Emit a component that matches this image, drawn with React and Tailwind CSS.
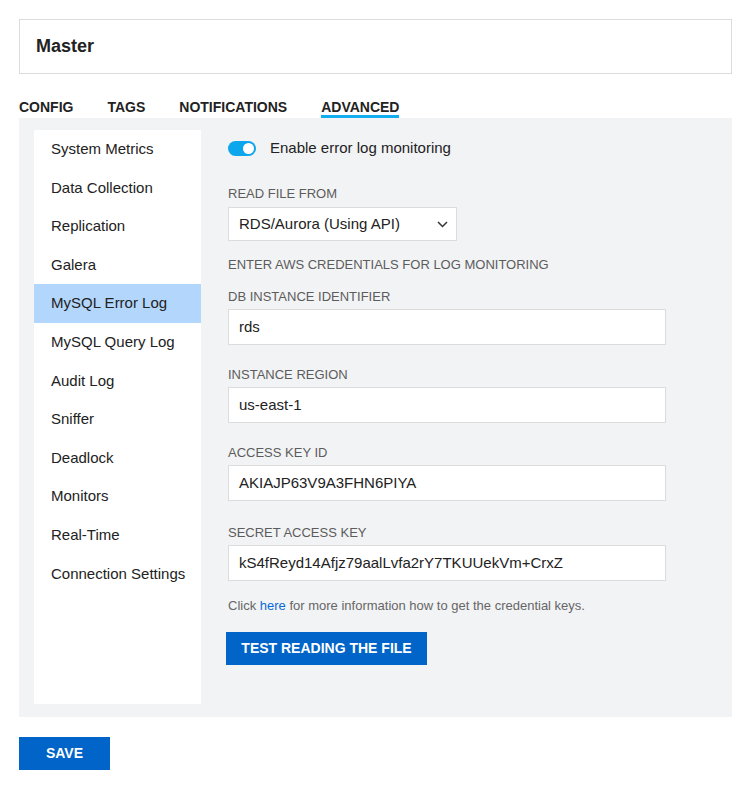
import { useState } from "react";

const menu = [
  "System Metrics",
  "Data Collection",
  "Replication",
  "Galera",
  "MySQL Error Log",
  "MySQL Query Log",
  "Audit Log",
  "Sniffer",
  "Deadlock",
  "Monitors",
  "Real-Time",
  "Connection Settings",
];

const tabs = ["CONFIG", "TAGS", "NOTIFICATIONS", "ADVANCED"];

function Field({ label, value, className }) {
  return (
    <div className={className}>
      <div className="text-[13px] leading-[16px] text-[#5c5c5c]">{label}</div>
      <div className="mt-[4px] w-[438px] h-[36px] bg-white border border-[#dcdcdc] flex items-center pl-[10px] text-[15px] text-[#222]">
        {value}
      </div>
    </div>
  );
}

export default function App() {
  const [active, setActive] = useState("MySQL Error Log");
  const [enabled, setEnabled] = useState(true);

  return (
    <div className="px-[19px] pt-[19px] pb-[33px] bg-white font-['Liberation_Sans',Arial,sans-serif] text-[#222]">
      {/* Header card */}
      <div className="h-[55px] border border-[#dcdcdc] flex items-center pl-[16px]">
        <h1 className="text-[18px] font-bold">Master</h1>
      </div>

      {/* Tabs */}
      <div className="mt-[25px] flex gap-[34px]">
        {tabs.map((t) => (
          <div
            key={t}
            className={`text-[14px] leading-[16px] font-bold border-b-[3px] ${
              t === "ADVANCED" ? "border-[#12aef0]" : "border-transparent"
            }`}
          >
            {t}
          </div>
        ))}
      </div>

      {/* Panel */}
      <div className="bg-[#f2f3f5] h-[599px] px-[15px] pt-[12px] pb-[13px] flex">
        {/* Side menu */}
        <div className="w-[167px] h-[574px] bg-white">
          {menu.map((m) => (
            <div
              key={m}
              onClick={() => setActive(m)}
              className={`h-[38.6px] flex items-center pl-[17px] text-[15px] cursor-pointer ${
                m === active ? "bg-[#b3d6fc]" : ""
              }`}
            >
              {m}
            </div>
          ))}
        </div>

        {/* Content */}
        <div className="ml-[27px] pt-[8px] flex flex-col">
          <div className="flex items-center h-[20px]">
            <button
              onClick={() => setEnabled(!enabled)}
              className={`w-[28px] h-[15px] rounded-full flex items-center px-[2px] ${
                enabled ? "bg-[#0ba6ec] justify-end" : "bg-[#c9c9c9] justify-start"
              }`}
            >
              <span className="w-[11px] h-[11px] rounded-full bg-white" />
            </button>
            <span className="ml-[14px] text-[15px]">Enable error log monitoring</span>
          </div>

          <div className="mt-[28px] text-[13px] leading-[16px] text-[#5c5c5c]">READ FILE FROM</div>
          <div className="mt-[5px] w-[229px] h-[34px] bg-white border border-[#dcdcdc] flex items-center justify-between pl-[10px] pr-[8px] text-[15px]">
            <span>RDS/Aurora (Using API)</span>
            <svg width="11" height="7" viewBox="0 0 11 7" fill="none">
              <polyline points="1,1 5.5,5.5 10,1" stroke="#333" strokeWidth="1.5" />
            </svg>
          </div>

          <div className="mt-[16px] text-[13px] leading-[16px] text-[#5c5c5c]">
            ENTER AWS CREDENTIALS FOR LOG MONITORING
          </div>

          <Field className="mt-[16px]" label="DB INSTANCE IDENTIFIER" value="rds" />
          <Field className="mt-[22px]" label="INSTANCE REGION" value="us-east-1" />
          <Field className="mt-[22px]" label="ACCESS KEY ID" value="AKIAJP63V9A3FHN6PIYA" />
          <Field
            className="mt-[24px]"
            label="SECRET ACCESS KEY"
            value="kS4fReyd14Afjz79aalLvfa2rY7TKUUekVm+CrxZ"
          />

          <p className="mt-[17px] text-[13px] leading-[16px] text-[#666]">
            Click <a className="text-[#0a6ad6]">here</a> for more information how to get the credential keys.
          </p>

          <button className="mt-[18px] -ml-[2px] w-[201px] h-[33px] bg-[#0064c8] text-white text-[14px] font-bold">
            TEST READING THE FILE
          </button>
        </div>
      </div>

      <button className="mt-[20px] w-[91px] h-[33px] bg-[#0064c8] text-white text-[14px] font-bold">
        SAVE
      </button>
    </div>
  );
}
